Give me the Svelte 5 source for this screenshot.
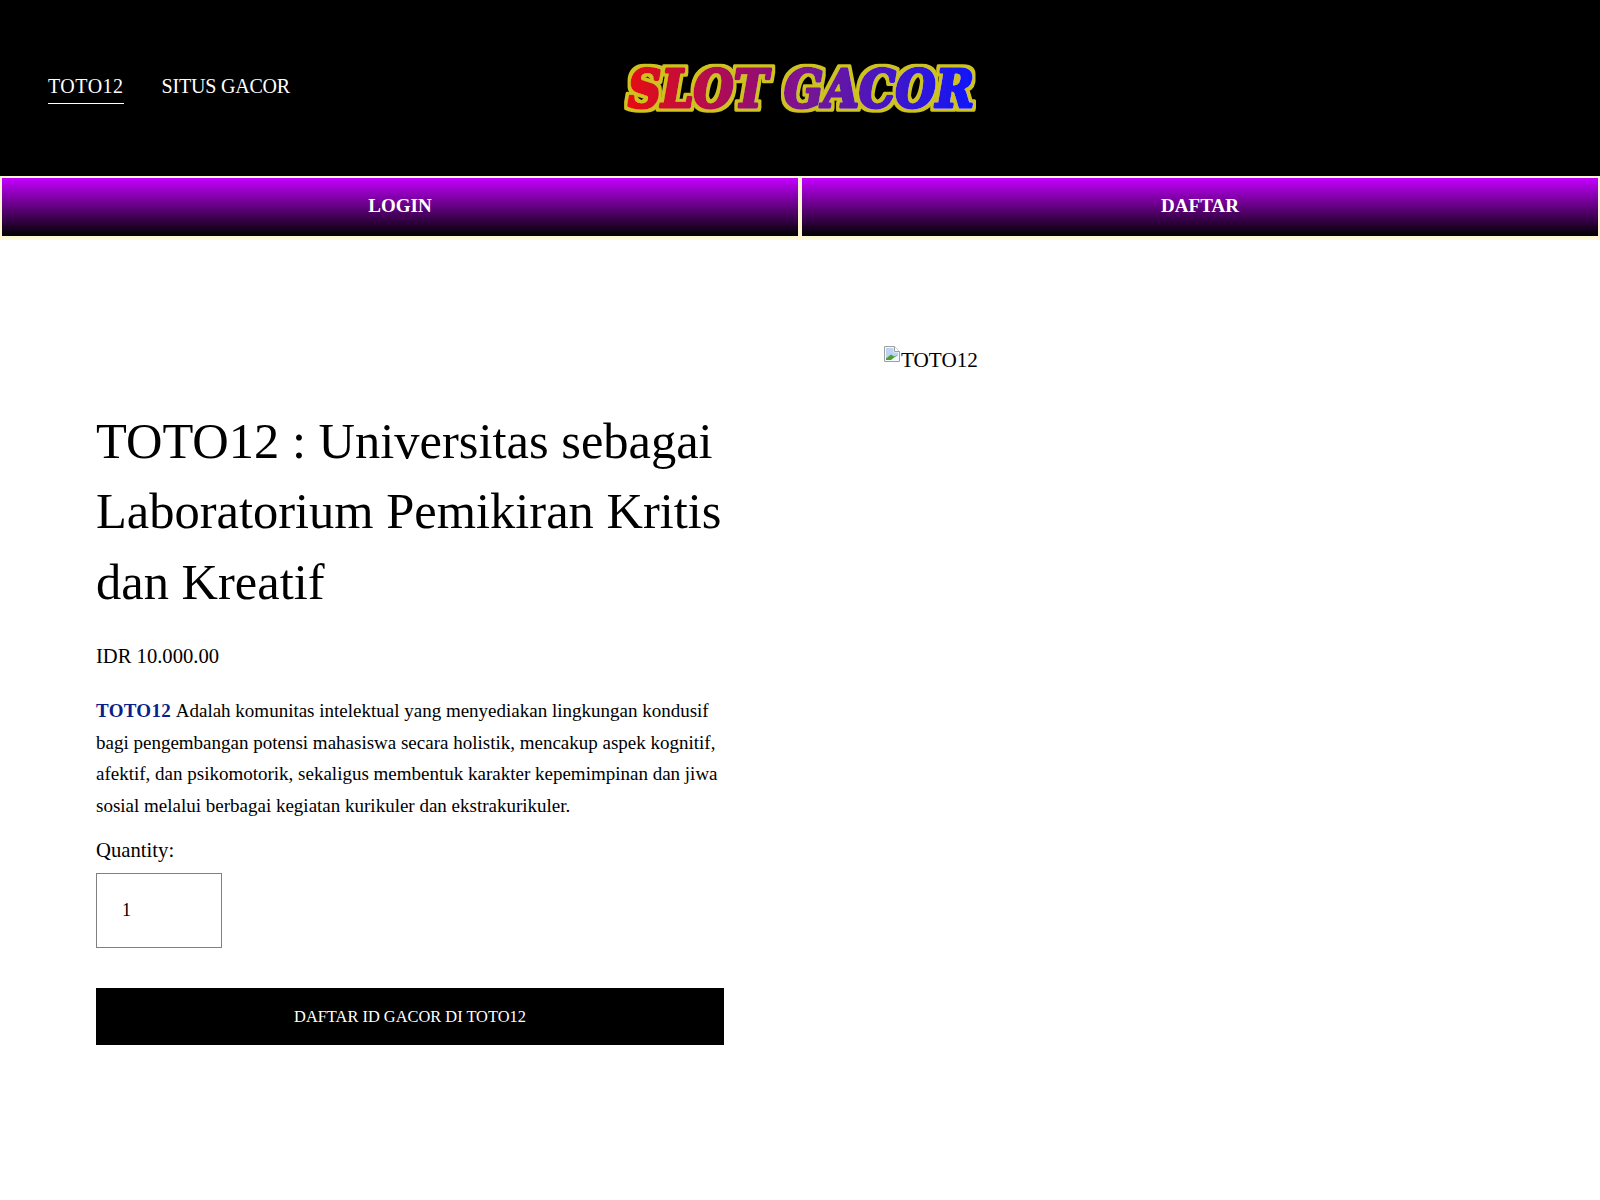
<script>
  const paragraph = 'Adalah komunitas intelektual yang menyediakan lingkungan kondusif bagi pengembangan potensi mahasiswa secara holistik, mencakup aspek kognitif, afektif, dan psikomotorik, sekaligus membentuk karakter kepemimpinan dan jiwa sosial melalui berbagai kegiatan kurikuler dan ekstrakurikuler.';
</script>

<div class="page">
  <header class="top">
    <nav class="nav">
      <a class="link active" href="#a">TOTO12</a>
      <a class="link second" href="#b">SITUS GACOR</a>
    </nav>
    <div class="logo">
      <svg width="360" height="72" viewBox="0 0 360 72" role="img" aria-label="SLOT GACOR">
        <defs>
          <linearGradient id="lg" gradientUnits="userSpaceOnUse" x1="0" x2="356" y1="0" y2="0">
            <stop offset="0" stop-color="#e80a10" />
            <stop offset="0.5" stop-color="#7a1290" />
            <stop offset="1" stop-color="#0a18ff" />
          </linearGradient>
          <filter id="outline" x="-5%" y="-20%" width="110%" height="140%">
            <feMorphology in="SourceAlpha" operator="dilate" radius="2.5" result="grown" />
            <feFlood flood-color="#cfc21c" />
            <feComposite in2="grown" operator="in" result="edge" />
            <feMerge>
              <feMergeNode in="edge" />
              <feMergeNode in="SourceGraphic" />
            </feMerge>
          </filter>
        </defs>
        <g transform="translate(0 5.500) scale(1 1.150)" filter="url(#outline)">
          <text class="logotext" x="4" y="41" textLength="346" lengthAdjust="spacingAndGlyphs" fill="url(#lg)" stroke="url(#lg)" stroke-width="3" stroke-linejoin="round">SLOT GACOR</text>
        </g>
      </svg>
    </div>
  </header>

  <div class="actions">
    <a class="btn" href="#l">LOGIN</a>
    <a class="btn" href="#d">DAFTAR</a>
  </div>

  <main class="product">
    <section class="info">
      <h1>TOTO12 : Universitas sebagai Laboratorium Pemikiran Kritis dan Kreatif</h1>
      <p class="price">IDR 10.000.00</p>
      <p class="desc"><strong>TOTO12</strong> {paragraph}</p>
      <label class="qlabel" for="q">Quantity:</label>
      <input id="q" class="qty" type="text" value="1" />
      <button class="buy" type="button">DAFTAR ID GACOR DI TOTO12</button>
    </section>
    <section class="media">
      <span class="broken">
        <svg class="bicon" width="16" height="16" viewBox="0 0 16 16" aria-hidden="true">
          <path d="M0.5 0.5H10.5L15.5 5.500V15.500H0.5Z" fill="#f4f7fb" stroke="#a0a0a0" />
          <path d="M10.500 0.500V5.500H15.500" fill="#fff" stroke="#a0a0a0" />
          <path d="M2 2H9.500V6.500H14V10L2 14Z" fill="#bcd3f2" />
          <path d="M2 14V12.500L7 8.500L10 10.500L14 8.500L7 14Z" fill="#4f9e35" />
        </svg><span class="alt">TOTO12</span>
      </span>
    </section>
  </main>
</div>

<style>
  :global(body) { margin: 0; background: #fff; }
  .page { min-height: 1200px; font-family: "Liberation Serif", serif; color: #000; }
  a { text-decoration: none; }

  .top { position: relative; height: 176px; background: #000; display: flex; align-items: center; padding: 0 48px; box-sizing: border-box; }
  .nav { display: flex; gap: 38px; margin-top: 1px; }
  .link { color: #fff; font-size: 20px; line-height: 26px; padding: 0 0 4px; border-bottom: 1px solid transparent; letter-spacing: 0.5px; }
  .link.second { letter-spacing: -0.2px; }
  .link.active { border-bottom-color: #fff; }
  .logo { position: absolute; left: 624px; top: 54px; line-height: 0; }
  .logotext { font-family: "DejaVu Serif", serif; font-weight: 700; font-style: italic; font-size: 45px; }

  .actions { display: flex; border-bottom: 2px solid #fdf8dc; }
  .btn { flex: 1; height: 56px; padding-bottom: 2px; box-sizing: content-box; display: flex; align-items: center; justify-content: center; color: #fff; font-weight: 700; font-size: 19px; background: linear-gradient(#c400ff, #000); border: 2px solid #fdf6d0; }

  .product { display: grid; grid-template-columns: 628px 1fr; column-gap: 160px; padding: 105px 96px 0; }
  h1 { margin: 61px 0 0; font-weight: 400; font-size: 50.500px; line-height: 70.400px; }
  .price { margin: 25px 0 0; font-size: 20.600px; line-height: 28px; }
  .desc { margin: 25px 0 0; font-size: 19px; line-height: 31.500px; }
  .desc strong { color: #0b1f8a; letter-spacing: 0.3px; margin-right: 1px; }
  .qlabel { display: block; margin-top: 16px; font-size: 20.700px; line-height: 26px; }
  .qty { display: block; margin-top: 10px; width: 126px; height: 75px; box-sizing: border-box; border: 1px solid #808080; padding: 0 25px; font: 18px "Liberation Serif", serif; color: #000; border-radius: 0; outline: 0; }
  .buy { display: block; margin-top: 40px; width: 100%; height: 57px; border: 0; background: #000; color: #fff; font: 16.400px "Liberation Serif", serif; padding: 0; }
  .broken { display: inline-block; font-size: 21.200px; line-height: 30px; }
  .bicon { vertical-align: 5px; margin-right: 1px; }
</style>
